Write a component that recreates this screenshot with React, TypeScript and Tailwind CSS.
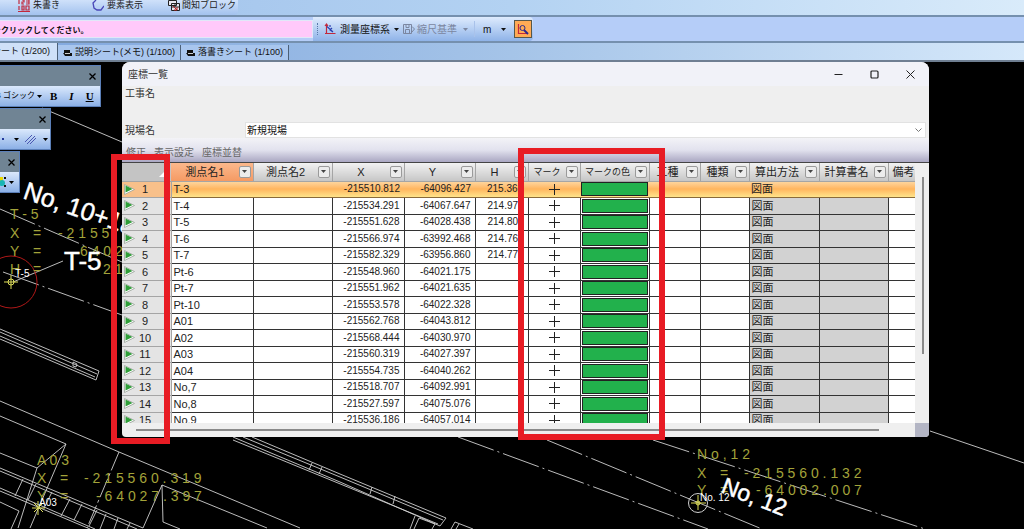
import type { ReactNode } from 'react';

type PointRow = {
  name: string;
  x: string;
  y: string;
  h?: string;
};

const POINTS: PointRow[] = [
  { name: 'T-3', x: '-215510.812', y: '-64096.427', h: '215.36' },
  { name: 'T-4', x: '-215534.291', y: '-64067.647', h: '214.97' },
  { name: 'T-5', x: '-215551.628', y: '-64028.438', h: '214.80' },
  { name: 'T-6', x: '-215566.974', y: '-63992.468', h: '214.76' },
  { name: 'T-7', x: '-215582.329', y: '-63956.860', h: '214.77' },
  { name: 'Pt-6', x: '-215548.960', y: '-64021.175' },
  { name: 'Pt-7', x: '-215551.962', y: '-64021.635' },
  { name: 'Pt-10', x: '-215553.578', y: '-64022.328' },
  { name: 'A01', x: '-215562.768', y: '-64043.812' },
  { name: 'A02', x: '-215568.444', y: '-64030.970' },
  { name: 'A03', x: '-215560.319', y: '-64027.397' },
  { name: 'A04', x: '-215554.735', y: '-64040.262' },
  { name: 'No,7', x: '-215518.707', y: '-64092.991' },
  { name: 'No,8', x: '-215527.597', y: '-64075.076' },
  { name: 'No,9', x: '-215536.186', y: '-64057.014' },
];

const COLUMNS = [
  { label: '測点名1', width: 'w-[82px]', text: 'text-[11px]', active: true },
  { label: '測点名2', width: 'w-[79px]', text: 'text-[11px]' },
  { label: 'X', width: 'w-[72px]', text: 'text-[11px]' },
  { label: 'Y', width: 'w-[71px]', text: 'text-[11px]' },
  { label: 'H', width: 'w-[53px]', text: 'text-[11px]' },
  { label: 'マーク', width: 'w-[52px]', text: 'text-[9px]' },
  { label: 'マークの色', width: 'w-[69px]', text: 'text-[9px]' },
  { label: '工種', width: 'w-[51px]', text: 'text-[11px]' },
  { label: '種類', width: 'w-[49px]', text: 'text-[11px]' },
  { label: '算出方法', width: 'w-[70px]', text: 'text-[11px]' },
  { label: '計算書名', width: 'w-[69px]', text: 'text-[11px]' },
];

const Caret = ({ className = '' }: { className?: string }) => (
  <svg viewBox="0 0 5 3" className={`h-[3px] w-[5px] shrink-0 ${className}`} fill="currentColor">
    <path d="M0 0h5L2.5 3z" />
  </svg>
);

const RedNumberIcon = () => (
  <svg viewBox="0 0 12 12" className="size-3" fill="none" stroke="#c2283c" strokeWidth="1.200">
    <path d="M1 0v4M4 0h2v2H4v2h2M8 0h3v4H8M8 2h3M1 6v4M4 6h2v4H4zM8 6h3v4H8zM0 11.500h12" />
  </svg>
);

const ElementIcon = () => (
  <svg viewBox="0 0 12 12" className="size-3" fill="none" stroke="#4a48b8" strokeWidth="1.3">
    <path d="M4 0 1 3l1 5 3 2h4l3-4" />
  </svg>
);

const BlockIcon = () => (
  <svg viewBox="0 0 12 12" className="size-3" fill="none" stroke="#222" strokeWidth="1">
    <path d="M.5.5h8v5h-8zM3.500 3.500h8v7h-8z" fill="#e8e8f0" />
    <path d="M3.500 7h8M7 3.500V7" />
    <path d="m5 6 4 4M9 7v3H6" stroke="#b22" />
  </svg>
);

const CoordIcon = () => (
  <svg viewBox="0 0 12 12" className="size-3 shrink-0" fill="none">
    <path d="M2.500 11V1.500M1 3l1.500-2L4 3M1 10.500h10.500" stroke="#c2283c" strokeWidth="1.200" />
    <path d="M3 3.500 9 9M6 2v2M8 5l-2 2 3 2" stroke="#2a3fb0" strokeWidth="1.200" />
  </svg>
);

const ScaleIcon = () => (
  <svg viewBox="0 0 12 12" className="size-3 shrink-0" fill="none" stroke="#7b86a0">
    <path d="M.5 1.500h8v9h-8zM3 1.500v3h3v-3M2.500 10V6.500h4V10M9 3.500l2.500 2.500L9 9" />
  </svg>
);

const SheetIcon = () => (
  <svg viewBox="0 0 9 8" className="h-2 w-[9px] shrink-0">
    <path d="M1 1h6v3H1zM0 4h9v3H2z" fill="#111" />
    <path d="M2 4.500h5" stroke="#fff" strokeWidth=".8" />
  </svg>
);

const PlayIcon = () => (
  <svg viewBox="0 0 11 11" className="h-[11px] w-[11px] shrink-0">
    <path d="M.5.500v10l10-5z" fill="#fff" stroke="#9aa59a" strokeWidth=".8" />
    <path d="M1.500 1.500v7l7-3.500z" fill="#2f9e38" />
  </svg>
);

const FilterButton = ({ label }: { label: string }) => (
  <button
    type="button"
    aria-label={label}
    className="mr-0.5 flex size-3 shrink-0 items-center justify-center rounded-xs border border-[#9a9a9a] bg-[#ececec] text-[#444]"
  >
    <Caret />
  </button>
);

const FloatingBar = ({ className, children }: { className: string; children: ReactNode }) => (
  <div className={`absolute left-0 border border-l-0 border-[#5b7fb8] bg-[#708494] ${className}`}>
    <div className="flex h-5 items-center justify-end pr-1">
      <button type="button" aria-label="閉じる" className="text-black">
        <svg viewBox="0 0 7 7" className="size-[7px]" stroke="currentColor" strokeWidth="1.300">
          <path d="m.5.500 6 6M6.500.500l-6 6" />
        </svg>
      </button>
    </div>
    <div className="flex h-5 items-center overflow-hidden bg-linear-to-b from-[#dbe9fc] to-[#8cb0e6]">
      {children}
    </div>
  </div>
);

const Ribbon = () => (
  <div className="flex h-[15px] bg-linear-to-r from-[#9fc0ea] via-[#b3d2f2] to-[#d9ebfa]">
    <div className="flex w-[238px] items-start overflow-hidden rounded-br-sm bg-linear-to-b from-[#cfe1fa] to-[#a3c2ee] pl-[18px] text-[9px] leading-[10px] text-[#222]">
      <button type="button" className="flex w-[74px] gap-[3px]"><RedNumberIcon />朱書き</button>
      <button type="button" className="flex w-[76px] gap-[3px]"><ElementIcon />要素表示</button>
      <button type="button" className="flex gap-0.5 whitespace-nowrap"><BlockIcon />間知ブロック</button>
    </div>
  </div>
);

const CommandBar = () => (
  <div className="flex h-7 items-center border-y-2 border-[#7590ae] bg-[#b5cdf8] text-[10px] text-[#111]">
    <input
      type="text"
      aria-label="操作ガイド"
      readOnly
      defaultValue="をクリックしてください。"
      className="-ml-2 h-[18px] w-[321px] border border-[#e0e8f8] bg-[#ffc9fa] text-[8px] font-bold text-[#111]"
    />
    <div className="flex h-full items-center rounded-r-sm bg-linear-to-b from-[#deebfd] to-[#8fb3e8] pl-1">
      <span className="mr-1.5 h-3 border-l border-dotted border-[#5878a8]" />
      <button type="button" className="flex items-center gap-1">
        <CoordIcon />測量座標系<Caret />
      </button>
      <button type="button" disabled className="ml-1 flex items-center gap-0.5 text-[#7b86a0]">
        <ScaleIcon />縮尺基準<Caret className="ml-1" />
      </button>
      <span className="ml-1.5 h-4 border-l border-[#a9c2ea]" />
      <button type="button" className="ml-2 flex items-center gap-2.5">
        m<Caret />
      </button>
      <button
        type="button"
        aria-label="座標検索"
        className="ml-2 mr-px flex h-[18px] w-[18px] items-center justify-center border border-[#57574a] bg-[#ffab55]"
      >
        <svg viewBox="0 0 12 12" className="size-3" fill="none">
          <path d="M1.500 1v9.500H11" stroke="#c2283c" strokeWidth="1.200" />
          <circle cx="5.500" cy="5" r="2.500" stroke="#2b2b90" />
          <path d="m7 7 4 4" stroke="#2b2b90" strokeWidth="2" />
        </svg>
      </button>
    </div>
  </div>
);

const tabClass = 'flex h-[15px] items-center gap-[3px] whitespace-nowrap border-r border-[#4c6078] bg-[#a9c6ee] px-[5px]';

const SheetTabs = () => (
  <nav className="flex h-[19px] items-end overflow-hidden border-b-2 border-[#6f7f92] bg-linear-to-r from-[#7fa6de] via-[#a5c4e8] to-[#d5e8fa] text-[9px] text-[#111]">
    <a href="#sheet1" className="flex h-[17px] w-[58px] shrink-0 items-center justify-end whitespace-nowrap border-r border-[#4c6078] bg-[#cfe0f8] pr-[7px]">
      シート (1/200)
    </a>
    <a href="#sheet2" className={tabClass}><SheetIcon />説明シート(メモ) (1/100)</a>
    <a href="#sheet3" className={tabClass}><SheetIcon />落書きシート (1/100)</a>
  </nav>
);

const Drawing = () => (
  <svg viewBox="0 62 1024 467" preserveAspectRatio="xMinYMin slice" className="absolute inset-0 h-full w-full" fill="none">
    <g stroke="#d0d0d0" strokeWidth=".9">
      <path d="M42 108 122 142M13 282 63 261" />
      <path
        d="M0 209 122 262M3 272 122 315M458 437 708 529M547 440 762 529M653 440 925 529"
        strokeDasharray="38 4 2 4"
      />
      <path d="M930 431 1024 463" />
      <path d="M0 329 99 371 96 380 0 339M0 332 97 374M0 336 95 377M73 362l4 2-1 3-3-1z" />
      <path d="M0 401 119 452 300 528M0 416 66 444 30 528M66 444 37 468 18 528M0 453 37 468" />
      <path d="M119 452 87 528" strokeDasharray="20 3 3 3" />
      <path d="M0 468 143 528M0 471 137 529M0 488 95 529M0 491 90 529M23 479 15 496M36 484 28 500M52 492 44 508M70 499 61 516M82 504 74 520M97 510 89 526M106 514 100 529M118 518 114 529M130 523 127 529" />
      <path d="M0 502 19 511 11 529M162 485 143 528M162 485 163 522 180 529M162 485 267 528" />
      <path d="M233 437 340 482 440 526 446 518 340 474 252 437M243 437 340 477 443 520M233 440 438 524M312 463l-3 7M322 467l-3 7M372 487l-2 7M395 496l-2 8" />
      <path d="M415 516 410 529M419 518 414 529M419 518 435 524 432 529M473 529 455 522 451 529M459 524 456 529" />
    </g>
    <circle cx="11" cy="282" r="26" stroke="#b01818" />
    <circle cx="698" cy="503" r="9.500" stroke="#d0d0d0" />
    <g stroke="#dede5a">
      <path d="M4 282h14M11 275v14M691 503h15M698 495v15M32 508h13M38 501v14M34 503l9 9M43 503l-9 9" />
      <circle cx="11" cy="282" r="3" />
      <circle cx="698" cy="503" r="2" />
    </g>
    <g fill="#a3a33a" fontFamily="'Liberation Sans'" fontSize="14">
      <text x="10" y="219">T - 5</text>
      <text x="10" y="238">X</text>
      <text x="33" y="238">=</text>
      <text x="58" y="238">- 2 1 5 5</text>
      <text x="10" y="256">Y</text>
      <text x="33" y="256">=</text>
      <text x="80" y="256">6 4 0 2</text>
      <text x="10" y="274">H</text>
      <text x="33" y="274">=</text>
      <text x="103" y="274">2 1</text>
      <text x="37" y="465">A 0 3</text>
      <text x="37" y="483">X</text>
      <text x="60" y="483">=</text>
      <text x="84" y="483">- 2 1 5 5 6 0 . 3 1 9</text>
      <text x="37" y="501">Y</text>
      <text x="60" y="501">=</text>
      <text x="96" y="501">- 6 4 0 2 7 . 3 9 7</text>
      <text x="697" y="459">N o , 1 2</text>
      <text x="697" y="478">X</text>
      <text x="720" y="478">=</text>
      <text x="744" y="478">- 2 1 5 5 6 0 . 1 3 2</text>
      <text x="697" y="495">Y</text>
      <text x="720" y="495">=</text>
      <text x="756" y="495">- 6 4 0 0 2 . 0 0 7</text>
    </g>
    <g fill="#fff" fontFamily="'Liberation Sans'">
      <g stroke="#fff" strokeWidth=".5">
        <text x="22" y="198" fontSize="25" transform="rotate(19 22 198)">No, 10+18</text>
        <text x="64" y="270" fontSize="26">T-5</text>
        <text x="720" y="492" fontSize="23" transform="rotate(21 720 492)">No, 12</text>
      </g>
      <text x="15" y="277" fontSize="10">T-5</text>
      <text x="39" y="506" fontSize="10">A03</text>
      <text x="700" y="501" fontSize="10">No. 12</text>
    </g>
  </svg>
);

const headCell = 'h-[18px] border-r border-b border-[#a5a5a5] bg-linear-to-b from-[#f2f2f2] to-[#c6c6c6] p-0 font-normal';

const PointTable = () => (
  <table className="w-full table-fixed border-collapse text-[11px] leading-[14px] text-[#222]">
    <thead>
      <tr>
        <th className="h-[18px] w-[49px] border-b border-[#a5a5a5] bg-[#c4c4c4] p-0">
          <svg viewBox="0 0 6 6" className="mt-1 mr-1.5 ml-auto size-1.5" fill="#fff">
            <path d="M6 0v6H0z" />
          </svg>
        </th>
        {COLUMNS.map((col) => (
          <th
            key={col.label}
            className={`${headCell} ${col.width} ${col.text} ${col.active ? 'from-[#fbb88c]! to-[#f59a63]!' : ''}`}
          >
            <div className="flex items-center">
              <span className="grow whitespace-nowrap text-center">{col.label}</span>
              <FilterButton label={`${col.label}の絞り込み`} />
            </div>
          </th>
        ))}
        <th className={`${headCell} overflow-hidden whitespace-nowrap border-r-0 pl-1 text-left`}>備考</th>
      </tr>
    </thead>
    <tbody>
      {POINTS.map((row, i) => {
        const selected = i === 0;
        const cell = selected
          ? 'border-b border-[#8a6a3a] p-0'
          : 'border-r border-b border-[#333] p-0';
        const gray = selected ? '' : 'bg-[#d2d2d2]';
        return (
          <tr
            key={row.name}
            className={`odd:h-4 even:h-[17px] ${selected ? 'bg-linear-to-b from-[#fdd9a4] via-[#ffb55e] to-[#ffe48a]' : 'bg-white'}`}
          >
            <th className={`border-r border-b border-[#a5a5a5] p-0 font-normal ${selected ? 'bg-[#f8c08a]' : 'bg-[#e4e4e4]'}`}>
              <div className="flex h-[15px] items-center pl-0.5">
                <PlayIcon />
                <span className="w-5 text-center">{i + 1}</span>
              </div>
            </th>
            <td className={`${cell} pl-0.5`}>{row.name}</td>
            <td className={cell} />
            <td className={`${cell} pr-1 text-right text-[10px]`}>{row.x}</td>
            <td className={`${cell} pr-1 text-right text-[10px]`}>{row.y}</td>
            <td className={`${cell} pl-3 text-[10px]`}>{row.h}</td>
            <td className={cell}>
              <svg viewBox="0 0 11 11" className="mx-auto size-[11px]" stroke="#222">
                <path d="M0 5.500h11M5.500 0v11" />
              </svg>
            </td>
            <td className={`${cell} px-px`}>
              <div className="h-3.5 border border-[#222] bg-[#22b14c]" />
            </td>
            <td className={cell} />
            <td className={cell} />
            <td className={`${cell} ${gray} pl-0.5`}>図面</td>
            <td className={`${cell} ${gray}`} />
            <td className={`${cell} border-r-0`} />
          </tr>
        );
      })}
    </tbody>
  </table>
);

const CoordinateDialog = () => (
  <section className="absolute top-0 right-[95px] left-[122px] flex h-[375px] flex-col rounded-t-lg rounded-b-sm bg-[#efefef] text-[10px] text-[#333]">
    <header className="flex h-6 shrink-0 items-center justify-between rounded-t-lg bg-[#f1f2f8] pr-3.5 pl-1.5">
      <h1>座標一覧</h1>
      <div className="flex items-center gap-[27px] text-[#222]">
        <button type="button" aria-label="最小化">
          <svg viewBox="0 0 9 9" className="size-[9px]" stroke="currentColor"><path d="M.5 4.500h8" /></svg>
        </button>
        <button type="button" aria-label="最大化">
          <svg viewBox="0 0 9 9" className="size-[9px]" fill="none" stroke="currentColor" strokeWidth="1.200">
            <rect x="1" y="1" width="7" height="7" rx="1" />
          </svg>
        </button>
        <button type="button" aria-label="閉じる">
          <svg viewBox="0 0 9 9" className="size-[9px]" stroke="currentColor"><path d="m.5.500 8 8M8.500.500l-8 8" /></svg>
        </button>
      </div>
    </header>
    <div className="flex h-9 shrink-0 items-start pl-[3px]">工事名</div>
    <div className="flex h-4 shrink-0 items-center pr-[3px] pl-[3px]">
      <label htmlFor="site" className="w-[120px]">現場名</label>
      <div className="relative h-full grow">
        <select
          id="site"
          className="h-full w-full appearance-none border border-[#e2e2e2] bg-white pl-px text-[10px] text-[#111]"
        >
          <option>新規現場</option>
        </select>
        <svg viewBox="0 0 7 4" className="absolute top-1.5 right-1 h-1 w-[7px]" fill="none" stroke="#777">
          <path d="m.5.500 3 3 3-3" />
        </svg>
      </div>
    </div>
    <div className="flex h-[25px] shrink-0 items-center gap-2 border-b border-[#444] bg-linear-to-b from-[#f3f3f7] via-[#e2e2ee] to-[#aaa7c2] pt-1 pl-1 text-[#666]">
      <button type="button">修正</button>
      <button type="button">表示設定</button>
      <button type="button">座標並替</button>
    </div>
    <div className="flex min-h-0 grow">
      <div className="min-w-0 grow overflow-hidden">
        <PointTable />
      </div>
      <div className="w-3.5 shrink-0 pt-3.5 pl-[7px]">
        <div className="h-[177px] w-0.5 bg-[#8a8a8a]" />
      </div>
    </div>
    <div className="flex h-3.5 shrink-0 items-center">
      <div className="ml-3.5 h-0.5 grow bg-[#8a8a8a]" />
      <div className="ml-9 h-full w-3.5 rounded-br-sm bg-[#b3b5c4]" />
    </div>
    {/* 강조 표시 */}
    <div className="pointer-events-none absolute top-[92px] left-[-11px] h-[290px] w-[59px] border-6 border-[#e81c24]" />
    <div className="pointer-events-none absolute top-[86px] left-[396px] h-[292px] w-[147px] border-6 border-[#e81c24]" />
  </section>
);

const App = () => {
  return (
    <div className="flex min-h-screen flex-col bg-black font-['Liberation_Sans','Noto_Sans_CJK_JP',sans-serif]">
      <Ribbon />
      <CommandBar />
      <SheetTabs />
      <main className="relative min-h-[400px] grow overflow-hidden bg-black">
        <Drawing />
        <FloatingBar className="top-[3px] w-[101px]">
          <button type="button" className="flex w-[42px] items-center justify-end gap-0.5 whitespace-nowrap text-[8px]">
            S ゴシック<Caret />
          </button>
          <div className="ml-2 flex gap-3 font-['Liberation_Serif',serif] text-[11px] font-bold">
            <button type="button">B</button>
            <button type="button" className="italic">I</button>
            <button type="button" className="underline">U</button>
          </div>
        </FloatingBar>
        <FloatingBar className="top-[46px] w-[51px]">
          <span className="ml-0.5 size-0.5 bg-[#223a9c]" />
          <Caret className="ml-2.5" />
          <svg viewBox="0 0 12 11" className="mx-1.5 h-[11px] w-3" stroke="#4a56b0">
            <path d="M0 8 7 1M2 10l8-8M5 10l6-6" />
          </svg>
          <Caret />
        </FloatingBar>
        <FloatingBar className="top-[89px] w-5">
          <svg viewBox="0 0 7 12" className="h-3 w-[7px]">
            <path d="M0 1h3v4H0z" fill="#e8d800" />
            <circle cx="2" cy="7" r="3" fill="#19b5b5" />
            <path d="M4 1h2v2H4zM4 9h2v2H4z" fill="#111" />
          </svg>
          <Caret className="ml-0.5" />
        </FloatingBar>
        <CoordinateDialog />
      </main>
    </div>
  );
};

export default App;
